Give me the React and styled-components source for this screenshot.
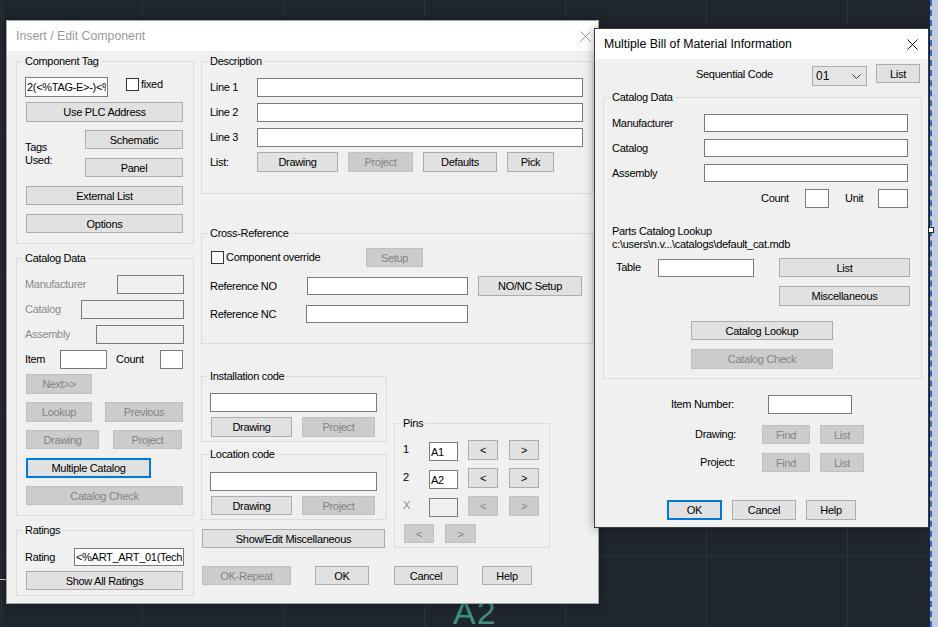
import React from 'react'
import styled, { createGlobalStyle, css } from 'styled-components'

const GlobalStyle = createGlobalStyle`
  * { box-sizing: border-box; }
  html, body { margin: 0; padding: 0; background: #20262e; }
  body { font-family: "Liberation Sans", Arial, sans-serif; }
`

const Desktop = styled.div`
  position: relative;
  width: 938px;
  height: 627px;
  overflow: hidden;
  background-color: #20262e;
  background-image:
    linear-gradient(to right, #2a323c 1px, transparent 1px),
    linear-gradient(to bottom, #2a323c 1px, transparent 1px);
  background-size: 141px 141px;
  background-position: 1px -9px;
`

const CadText = styled.span`
  position: absolute;
  left: 453px;
  top: 595px;
  font-family: "Liberation Sans", Arial, sans-serif;
  font-size: 34px;
  line-height: 34px;
  font-weight: 300;
  color: #3f8f83;
  letter-spacing: 1px;
`

const CadLine = styled.div`
  position: absolute;
  left: 0;
  top: 579px;
  width: 8px;
  height: 1px;
  background: #d8d8d8;
`

const SelectionEdge = styled.div`
  position: absolute;
  left: 930px;
  top: 0;
  width: 8px;
  height: 627px;
  background: #c3ccdc;
  border-left: 2px dashed #2f6fd0;
`

const Grip = styled.div`
  position: absolute;
  left: 928px;
  top: 227px;
  width: 6px;
  height: 6px;
  background: #fff;
  border: 1px solid #222;
`

const Window = styled.div`
  position: absolute;
  left: ${p => p.$x}px;
  top: ${p => p.$y}px;
  width: ${p => p.$w}px;
  height: ${p => p.$h}px;
  background: #f0f0f0;
  border: 1px solid ${p => (p.$active ? '#3c3c3c' : '#a3a3a3')};
  box-shadow: 0 0 10px rgba(0, 0, 0, 0.35);
  font-family: "Liberation Sans", Arial, sans-serif;
  font-size: 11px;
  letter-spacing: -0.3px;
  color: #000;
  display: flex;
  flex-direction: column;
`

const TitleBar = styled.div`
  height: 30px;
  flex-shrink: 0;
  background: #fff;
  display: flex;
  align-items: center;
  justify-content: space-between;
  padding: 0 ${p => p.$pr}px 0 9px;
`

const Title = styled.span`
  font-size: 12.3px;
  letter-spacing: 0;
  color: ${p => (p.$active ? '#000' : '#999')};
`

const Body = styled.div`
  display: flex;
  flex-direction: ${p => p.$dir || 'row'};
  gap: ${p => p.$gap || 0}px;
  padding: ${p => p.$pt}px 0 0 ${p => p.$pl}px;
`

const Column = styled.div`
  display: flex;
  flex-direction: column;
  width: ${p => p.$w}px;
  margin: ${p => p.$mt || 0}px 0 0 ${p => p.$ml || 0}px;
  flex-shrink: 0;
`

const GroupBox = styled.fieldset`
  margin: ${p => p.$mt || 0}px 0 0 0;
  padding: ${p => p.$pt}px 8px ${p => p.$pb}px 8px;
  border: 1px solid #dcdcdc;
  min-width: 0;
  width: ${p => (p.$w ? `${p.$w}px` : 'auto')};
`

const Legend = styled.legend`
  padding: 0 2px;
  margin-left: -2px;
  line-height: 13px;
  height: 13px;
`

const Row = styled.div`
  display: flex;
  align-items: ${p => p.$align || 'center'};
  height: ${p => p.$h}px;
  margin-top: ${p => p.$mt || 0}px;
  margin-left: ${p => p.$ml || 0}px;
`

const Btn = styled.button`
  font: inherit;
  letter-spacing: inherit;
  flex-shrink: 0;
  width: ${p => p.$w}px;
  height: ${p => p.$h || 20}px;
  margin: ${p => p.$mt || 0}px 0 0 ${p => p.$ml || 0}px;
  padding: 0;
  background: #e1e1e1;
  border: 1px solid #adadad;
  border-radius: 0;
  color: #000;
  white-space: nowrap;
  ${p => p.disabled && css`
    background: #cccccc;
    border-color: #bfbfbf;
    color: #838383;
  `}
  ${p => p.$focus && css`
    border: 2px solid #0078d7;
  `}
`

const TextBox = styled.input`
  font: inherit;
  letter-spacing: inherit;
  flex-shrink: 0;
  width: ${p => p.$w}px;
  height: ${p => p.$h || 19}px;
  margin: ${p => p.$mt || 0}px 0 0 ${p => p.$ml || 0}px;
  padding: 0 1px;
  border: 1px solid #7a7a7a;
  border-radius: 0;
  background: #fff;
  color: #000;
  outline: none;
  ${p => p.disabled && css`
    background: #f0f0f0;
  `}
`

const Lbl = styled.span`
  display: inline-block;
  flex-shrink: 0;
  width: ${p => (p.$w ? `${p.$w}px` : 'auto')};
  margin: ${p => p.$mt || 0}px 0 0 ${p => p.$ml || 0}px;
  line-height: 13px;
  white-space: pre-line;
  text-align: ${p => (p.$right ? 'right' : 'left')};
  color: ${p => (p.$dim ? '#8a8a8a' : '#000')};
`

const Note = styled.div`
  margin-top: ${p => p.$mt || 0}px;
  line-height: 13px;
  white-space: pre-line;
`

const CheckBox = styled.span`
  display: inline-block;
  flex-shrink: 0;
  width: 13px;
  height: 13px;
  margin: ${p => p.$mt || 0}px 0 0 ${p => p.$ml || 0}px;
  background: #fff;
  border: 1px solid #333;
`

const Combo = styled.div`
  display: flex;
  align-items: center;
  flex-shrink: 0;
  width: ${p => p.$w}px;
  height: 20px;
  margin: ${p => p.$mt || 0}px 0 0 ${p => p.$ml || 0}px;
  padding: 0 5px 0 3px;
  background: #e5e5e5;
  border: 1px solid #adadad;
  font-size: 12px;
  letter-spacing: 0;
  justify-content: space-between;
`

const CloseIcon = ({ color }) => (
  <svg width="11" height="11" viewBox="0 0 11 11">
    <path d="M0.5 0.5 L10.5 10.5 M10.5 0.5 L0.5 10.5" stroke={color} strokeWidth="1" fill="none" />
  </svg>
)

const Chevron = () => (
  <svg width="9" height="5" viewBox="0 0 9 5">
    <path d="M0.5 0.5 L4.5 4.5 L8.5 0.5" stroke="#333" strokeWidth="1" fill="none" />
  </svg>
)

const InsertEditComponent = () => (
  <Window $x={6} $y={20} $w={593} $h={584}>
    <TitleBar $pr={7}>
      <Title>Insert / Edit Component</Title>
      <CloseIcon color="#9a9a9a" />
    </TitleBar>
    <Body $pt={4} $pl={9} $gap={7}>
      <Column $w={178}>
        <GroupBox $pt={9} $pb={10}>
          <Legend>Component Tag</Legend>
          <Row $h={20} $align="flex-start">
            <TextBox $w={83} $h={20} defaultValue="2(<%TAG-E>-)<%TAG-E>" />
            <CheckBox $ml={18} $mt={1} />
            <Lbl $ml={2} $mt={1}>fixed</Lbl>
          </Row>
          <Row $h={20} $mt={5}>
            <Btn $ml={1} $w={157} $h={20}>Use PLC Address</Btn>
          </Row>
          <Row $h={47} $mt={8}>
            <Lbl $w={60}>{'Tags\nUsed:'}</Lbl>
            <Column $w={98}>
              <Btn $w={98} $h={19}>Schematic</Btn>
              <Btn $w={98} $h={19} $mt={9}>Panel</Btn>
            </Column>
          </Row>
          <Row $h={19} $mt={9}>
            <Btn $ml={1} $w={157} $h={19}>External List</Btn>
          </Row>
          <Row $h={19} $mt={9}>
            <Btn $ml={1} $w={157} $h={19}>Options</Btn>
          </Row>
        </GroupBox>

        <GroupBox $mt={8} $pt={10} $pb={10}>
          <Legend>Catalog Data</Legend>
          <Row $h={19}>
            <Lbl $w={92} $dim>Manufacturer</Lbl>
            <TextBox $w={67} disabled />
          </Row>
          <Row $h={19} $mt={6}>
            <Lbl $w={56} $dim>Catalog</Lbl>
            <TextBox $w={103} disabled />
          </Row>
          <Row $h={19} $mt={6}>
            <Lbl $w={71} $dim>Assembly</Lbl>
            <TextBox $w={88} disabled />
          </Row>
          <Row $h={19} $mt={6}>
            <Lbl $w={35}>Item</Lbl>
            <TextBox $w={47} />
            <Lbl $w={44} $ml={9}>Count</Lbl>
            <TextBox $w={23} />
          </Row>
          <Row $h={20} $mt={5}>
            <Btn $ml={1} $w={66} $h={20} disabled>Next&gt;&gt;</Btn>
          </Row>
          <Row $h={20} $mt={8}>
            <Btn $ml={1} $w={66} $h={20} disabled>Lookup</Btn>
            <Btn $ml={13} $w={78} $h={20} disabled>Previous</Btn>
          </Row>
          <Row $h={19} $mt={8}>
            <Btn $ml={1} $w={73} $h={19} disabled>Drawing</Btn>
            <Btn $ml={14} $w={69} $h={19} disabled>Project</Btn>
          </Row>
          <Row $h={20} $mt={9}>
            <Btn $ml={1} $w={125} $h={20} $focus>Multiple Catalog</Btn>
          </Row>
          <Row $h={19} $mt={8}>
            <Btn $ml={1} $w={157} $h={19} disabled>Catalog Check</Btn>
          </Row>
        </GroupBox>

        <GroupBox $mt={8} $pt={11} $pb={5}>
          <Legend>Ratings</Legend>
          <Row $h={18}>
            <Lbl $w={49}>Rating</Lbl>
            <TextBox $w={110} $h={18} defaultValue="<%ART_ART_01(Tech)%>" />
          </Row>
          <Row $h={19} $mt={5}>
            <Btn $ml={1} $w={157} $h={19}>Show All Ratings</Btn>
          </Row>
        </GroupBox>
      </Column>

      <Column $w={392}>
        <GroupBox $pt={10} $pb={21}>
          <Legend>Description</Legend>
          <Row $h={19}>
            <Lbl $w={47}>Line 1</Lbl>
            <TextBox $w={326} />
          </Row>
          <Row $h={19} $mt={6}>
            <Lbl $w={47}>Line 2</Lbl>
            <TextBox $w={326} />
          </Row>
          <Row $h={19} $mt={6}>
            <Lbl $w={47}>Line 3</Lbl>
            <TextBox $w={326} />
          </Row>
          <Row $h={20} $mt={5}>
            <Lbl $w={47}>List:</Lbl>
            <Btn $w={81}>Drawing</Btn>
            <Btn $ml={10} $w={65} disabled>Project</Btn>
            <Btn $ml={10} $w={74}>Defaults</Btn>
            <Btn $ml={10} $w={47}>Pick</Btn>
          </Row>
        </GroupBox>

        <GroupBox $mt={33} $pt={8} $pb={20}>
          <Legend>Cross-Reference</Legend>
          <Row $h={19}>
            <CheckBox $ml={1} />
            <Lbl $ml={2} $w={140}>Component override</Lbl>
            <Btn $w={57} $h={19} disabled>Setup</Btn>
          </Row>
          <Row $h={20} $mt={9}>
            <Lbl $w={97}>Reference NO</Lbl>
            <TextBox $w={161} $h={18} />
            <Btn $ml={10} $w={104} $h={20}>NO/NC Setup</Btn>
          </Row>
          <Row $h={18} $mt={9}>
            <Lbl $w={96}>Reference NC</Lbl>
            <TextBox $w={162} $h={18} />
          </Row>
        </GroupBox>

        <Row $h={178} $mt={26} $align="flex-start">
          <Column $w={186}>
            <GroupBox $pt={10} $pb={4}>
              <Legend>Installation code</Legend>
              <Row $h={19}>
                <TextBox $w={167} />
              </Row>
              <Row $h={20} $mt={5}>
                <Btn $ml={1} $w={81}>Drawing</Btn>
                <Btn $ml={10} $w={73} disabled>Project</Btn>
              </Row>
            </GroupBox>
            <GroupBox $mt={6} $pt={11} $pb={4}>
              <Legend>Location code</Legend>
              <Row $h={19}>
                <TextBox $w={167} />
              </Row>
              <Row $h={19} $mt={5}>
                <Btn $ml={1} $w={81} $h={19}>Drawing</Btn>
                <Btn $ml={10} $w={73} $h={19} disabled>Project</Btn>
              </Row>
            </GroupBox>
            <Row $h={19} $mt={9}>
              <Btn $ml={1} $w={183} $h={19}>Show/Edit Miscellaneous</Btn>
            </Row>
          </Column>

          <Column $w={156} $mt={47} $ml={7}>
            <GroupBox $pt={10} $pb={4}>
              <Legend>Pins</Legend>
              <Row $h={20} $align="flex-start">
                <Lbl $w={26} $mt={3}>1</Lbl>
                <TextBox $w={29} $mt={2} defaultValue="A1" />
                <Btn $ml={10} $w={30}>&lt;</Btn>
                <Btn $ml={11} $w={30}>&gt;</Btn>
              </Row>
              <Row $h={20} $mt={8} $align="flex-start">
                <Lbl $w={26} $mt={3}>2</Lbl>
                <TextBox $w={29} $mt={2} defaultValue="A2" />
                <Btn $ml={10} $w={30}>&lt;</Btn>
                <Btn $ml={11} $w={30}>&gt;</Btn>
              </Row>
              <Row $h={20} $mt={8} $align="flex-start">
                <Lbl $w={26} $mt={3} $dim>X</Lbl>
                <TextBox $w={29} $mt={2} disabled />
                <Btn $ml={10} $w={30} disabled>&lt;</Btn>
                <Btn $ml={11} $w={30} disabled>&gt;</Btn>
              </Row>
              <Row $h={19} $mt={8}>
                <Btn $ml={1} $w={30} $h={19} disabled>&lt;</Btn>
                <Btn $ml={11} $w={31} $h={19} disabled>&gt;</Btn>
              </Row>
            </GroupBox>
          </Column>
        </Row>

        <Row $h={19} $mt={18}>
          <Btn $ml={1} $w={89} $h={19} disabled>OK-Repeat</Btn>
          <Btn $ml={24} $w={54} $h={19}>OK</Btn>
          <Btn $ml={25} $w={64} $h={19}>Cancel</Btn>
          <Btn $ml={24} $w={50} $h={19}>Help</Btn>
        </Row>
      </Column>
    </Body>
  </Window>
)

const MultipleBom = () => (
  <Window $x={594} $y={28} $w={335} $h={500} $active>
    <TitleBar $pr={10}>
      <Title $active>Multiple Bill of Material Information</Title>
      <CloseIcon color="#111" />
    </TitleBar>
    <Body $dir="column" $pt={5} $pl={8}>
      <Row $h={22} $align="flex-start">
        <Lbl $ml={93} $w={116} $mt={4}>Sequential Code</Lbl>
        <Combo $w={55} $mt={2}>
          <span>01</span>
          <Chevron />
        </Combo>
        <Btn $ml={9} $w={44} $h={19}>List</Btn>
      </Row>

      <GroupBox $w={319} $mt={5} $pt={10} $pb={9}>
        <Legend>Catalog Data</Legend>
        <Row $h={18}>
          <Lbl $w={92}>Manufacturer</Lbl>
          <TextBox $w={204} $h={18} />
        </Row>
        <Row $h={18} $mt={7}>
          <Lbl $w={92}>Catalog</Lbl>
          <TextBox $w={204} $h={18} />
        </Row>
        <Row $h={18} $mt={7}>
          <Lbl $w={92}>Assembly</Lbl>
          <TextBox $w={204} $h={18} />
        </Row>
        <Row $h={19} $mt={7}>
          <Lbl $ml={149} $w={44}>Count</Lbl>
          <TextBox $w={24} />
          <Lbl $ml={16} $w={33}>Unit</Lbl>
          <TextBox $w={30} />
        </Row>
        <Note $mt={17}>{'Parts Catalog Lookup\nc:\\users\\n.v...\\catalogs\\default_cat.mdb'}</Note>
        <Row $h={19} $mt={7}>
          <Lbl $ml={4} $w={42}>Table</Lbl>
          <TextBox $w={96} $h={18} />
          <Btn $ml={25} $w={131} $h={19}>List</Btn>
        </Row>
        <Row $h={20} $mt={9}>
          <Btn $ml={167} $w={131}>Miscellaneous</Btn>
        </Row>
        <Row $h={19} $mt={15}>
          <Btn $ml={79} $w={142} $h={19}>Catalog Lookup</Btn>
        </Row>
        <Row $h={20} $mt={9}>
          <Btn $ml={79} $w={142} disabled>Catalog Check</Btn>
        </Row>
      </GroupBox>

      <Row $h={19} $mt={16}>
        <Lbl $w={131} $right>Item Number:</Lbl>
        <TextBox $ml={34} $w={84} />
      </Row>
      <Row $h={19} $mt={11}>
        <Lbl $w={133} $right>Drawing:</Lbl>
        <Btn $ml={26} $w={48} $h={19} disabled>Find</Btn>
        <Btn $ml={10} $w={44} $h={19} disabled>List</Btn>
      </Row>
      <Row $h={19} $mt={9}>
        <Lbl $w={132} $right>Project:</Lbl>
        <Btn $ml={27} $w={48} $h={19} disabled>Find</Btn>
        <Btn $ml={10} $w={44} $h={19} disabled>List</Btn>
      </Row>
      <Row $h={20} $mt={28}>
        <Btn $ml={64} $w={55} $focus>OK</Btn>
        <Btn $ml={10} $w={64}>Cancel</Btn>
        <Btn $ml={10} $w={50}>Help</Btn>
      </Row>
    </Body>
  </Window>
)

export default function App() {
  return (
    <>
      <GlobalStyle />
      <Desktop>
        <CadText>A2</CadText>
        <CadLine />
        <InsertEditComponent />
        <MultipleBom />
        <SelectionEdge />
        <Grip />
      </Desktop>
    </>
  )
}
